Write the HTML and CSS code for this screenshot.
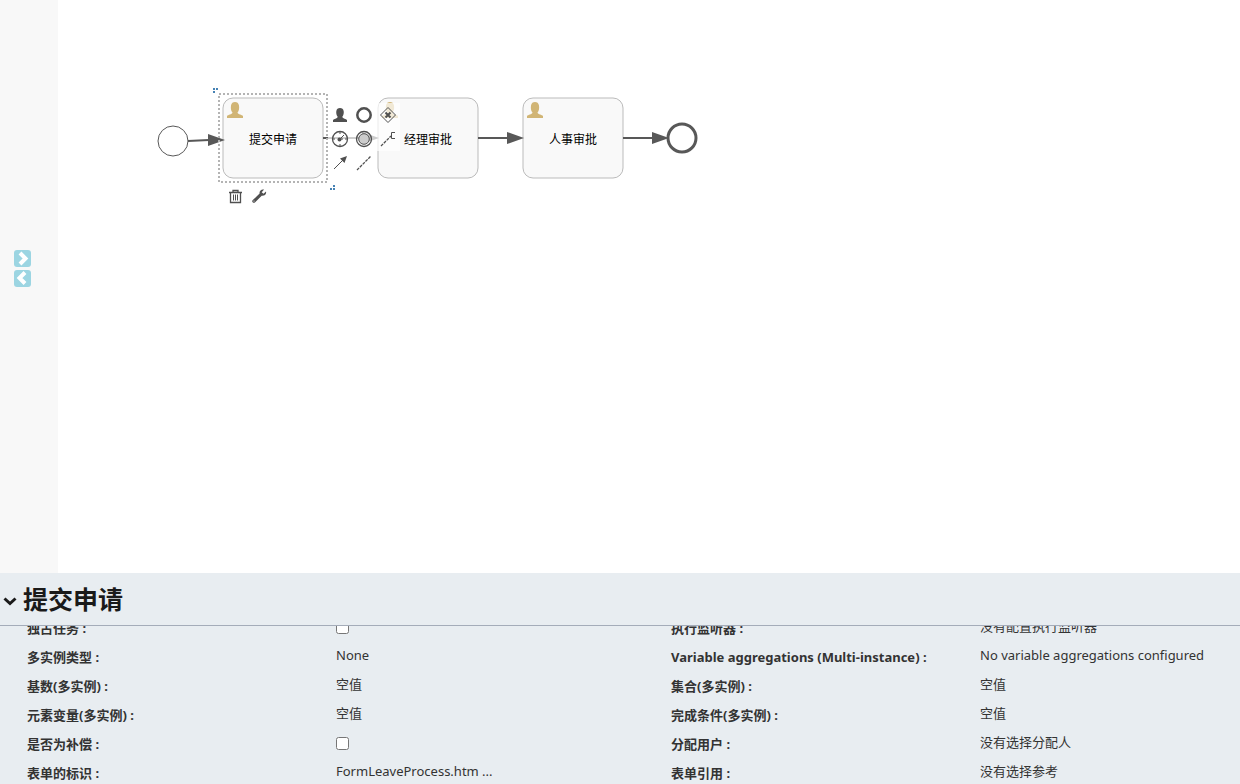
FILE: index.html
```html
<!DOCTYPE html>
<html lang="zh-CN">
<head>
<meta charset="utf-8">
<title>流程设计器</title>
<link rel="stylesheet" href="styles.css">
</head>
<body>
<div class="editor">
  <main class="workspace">
    <aside class="palette">
      <button class="toggle" aria-label="展开"><svg viewBox="0 0 17 17"><path d="M6 3l5.500 5.500L6 14"/></svg></button>
      <button class="toggle" aria-label="收起"><svg viewBox="0 0 17 17"><path d="M11 2.500L5.500 8l5.500 5.500"/></svg></button>
    </aside>
    <section class="canvas">
      <svg class="diagram" aria-label="请假流程">
        <defs>
          <path id="user" d="M0 16v-2c1-1.300 5-1.500 5.500-3.500C4 9 3.600 6.500 4 3.500 4.400 1 6 0 8 0s3.600 1 4 3.500c.4 3 0 5.500-1.500 7 .5 2 4.500 2.200 5.500 3.500v2z"/>
        </defs>
        <circle class="start" cx="115" cy="141" r="15"/>
        <circle class="end" cx="624" cy="138" r="14"/>
        <rect class="task" x="165" y="98" width="100" height="80" rx="10"/>
        <rect class="task" x="320" y="98" width="100" height="80" rx="10"/>
        <rect class="task" x="465" y="98" width="100" height="80" rx="10"/>
        <g class="flow">
          <path d="M130 141l21-1M265 138h43M420 138h32M565 138h32"/>
          <path class="tip" d="M150 134l17 6-17 6zM304 132l17 6-17 6zM449 132l17 6-17 6zM594 132l17 6-17 6z"/>
        </g>
        <use class="user" href="#user" x="169" y="102"/>
        <use class="user" href="#user" x="324" y="102"/>
        <use class="user" href="#user" x="469" y="102"/>
        <text class="name" x="215" y="144">提交申请</text>
        <text class="name" x="370" y="144">经理审批</text>
        <text class="name" x="515" y="144">人事审批</text>
        <rect class="selection" x="161" y="94" width="108" height="88"/>
        <path class="grip" d="M155 88h2v2h-2zM158 88h2v2h-2zM155 91h2v2h-2zM275 185h2v2h-2zM272 188h2v2h-2zM275 188h2v2h-2z"/>
      </svg>
      <div class="pad pad-append">
        <button aria-label="用户任务"><svg viewBox="0 0 24 24"><path class="solid" d="M5 19v-2c1-1.300 4-1.300 4.800-3C8.500 12.500 8 10.500 8.300 8.300 8.600 6 10 5 12 5s3.400 1 3.700 3.300c.3 2.200-.2 4.200-1.500 5.700.8 1.700 3.800 1.700 4.800 3v2z"/></svg></button>
        <button aria-label="结束事件"><svg viewBox="0 0 24 24"><circle class="bold" cx="12" cy="12" r="6.700"/></svg></button>
        <button aria-label="排他网关"><svg viewBox="0 0 24 24"><path d="M12 4.500l7.500 7.500-7.500 7.500L4.500 12z"/><path class="thick" d="M9.500 9.500l5 5m0-5l-5 5"/></svg></button>
        <button aria-label="定时事件"><svg viewBox="0 0 24 24"><circle class="ring" cx="12" cy="12" r="7.500"/><path d="M12 5v2M12 17v2M5 12h2M17 12h2M12 12l4-4M12 12h3"/><circle class="solid" cx="11.500" cy="12.500" r="2"/></svg></button>
        <button aria-label="中间事件"><svg viewBox="0 0 24 24"><circle class="ring" cx="12" cy="12" r="7.500"/><circle class="shade" cx="12" cy="12" r="5.300"/></svg></button>
        <button aria-label="文本注释"><svg viewBox="0 0 24 24"><path class="broken" d="M5 19L15 9"/><path d="M19 5.500h-3.500v6H19"/></svg></button>
        <button aria-label="顺序流"><svg viewBox="0 0 24 24"><path d="M6 18L16 8"/><path class="solid" d="M19 5l-2.500 7-4.500-4.500z"/></svg></button>
        <button aria-label="关联"><svg viewBox="0 0 24 24"><path class="broken" d="M5 19L19 5"/></svg></button>
      </div>
      <div class="pad pad-edit">
        <button aria-label="删除"><svg viewBox="0 0 24 24"><path class="ring" d="M6 8.500h13M10 8V6.500h5V8M7.500 9v9.500h10V9"/><path d="M10.500 10.500v6M12.500 10.500v6M14.500 10.500v6"/></svg></button>
        <button aria-label="更改类型"><svg viewBox="0 0 24 24"><path class="solid" d="M19 7.500L16.500 9.800l-1.800-1.600 2.400-2.600c-2.400-.8-5 .9-4.500 4L5.600 16.300c-1.300 1.500.8 3.400 2.300 2.100l6.800-6.600c3 .3 5-1.900 4.300-4.300z"/><circle class="hole" cx="7" cy="17" r=".6"/></svg></button>
      </div>
    </section>
  </main>
  <section class="properties">
    <header class="titlebar">
      <button class="collapse" aria-label="折叠属性"><svg viewBox="0 0 14 10"><path d="M1.500 2.500L7 7.500l5.500-5"/></svg></button>
      <h1>提交申请</h1>
    </header>
    <div class="scroller">
      <dl class="fields">
        <dt><label for="exclusive">独占任务 :</label></dt><dd><input type="checkbox" id="exclusive"></dd>
        <dt>执行监听器 :</dt><dd>没有配置执行监听器</dd>
        <dt>多实例类型 :</dt><dd>None</dd>
        <dt>Variable aggregations (Multi-instance) :</dt><dd>No variable aggregations configured</dd>
        <dt>基数(多实例) :</dt><dd>空值</dd>
        <dt>集合(多实例) :</dt><dd>空值</dd>
        <dt>元素变量(多实例) :</dt><dd>空值</dd>
        <dt>完成条件(多实例) :</dt><dd>空值</dd>
        <dt><label for="compensation">是否为补偿 :</label></dt><dd><input type="checkbox" id="compensation"></dd>
        <dt>分配用户 :</dt><dd>没有选择分配人</dd>
        <dt>表单的标识 :</dt><dd>FormLeaveProcess.htm ...</dd>
        <dt>表单引用 :</dt><dd>没有选择参考</dd>
      </dl>
    </div>
  </section>
</div>
</body>
</html>
```
FILE: styles.css
```css
* { box-sizing: border-box; }
body { margin: 0; color: #333; font: 13px/20px "Noto Sans", "Noto Sans CJK SC", sans-serif; }
button { display: grid; place-items: center; margin: 0; padding: 0; border: 0; background: none; cursor: pointer; }
.editor { display: flex; flex-direction: column; height: 100vh; overflow: hidden; }
.workspace { display: flex; flex: 1; min-height: 0; background: #fff; }

.palette { display: flex; flex-direction: column; gap: 3px; width: 58px; padding: 250px 14px 0; background: #f8f8f8; }
.toggle { width: 17px; height: 17px; border-radius: 3px; background: #9cd5e2; }
.toggle svg { width: 17px; height: 17px; fill: none; stroke: #fff; stroke-width: 4; }

.canvas { position: relative; flex: 1; min-width: 0; }
.diagram { display: block; width: 100%; height: 100%; }
.flow { fill: none; stroke: #585858; stroke-width: 2; }
.tip { fill: #585858; stroke: none; }
.start { fill: #fff; stroke: #585858; stroke-width: 1; }
.end { fill: #fff; stroke: #585858; stroke-width: 3; }
.task { fill: #f9f9f9; stroke: #bbb; stroke-width: 1; }
.user { fill: #d1b575; }
.name { fill: #000; font-size: 12px; text-anchor: middle; }
.selection { fill: none; stroke: #b4b4b4; stroke-width: 2; stroke-dasharray: 2 2; }
.grip { fill: #4682b4; }

.pad { position: absolute; display: grid; grid-auto-rows: 24px; }
.pad-append { left: 270px; top: 103px; grid-template-columns: repeat(3, 24px); }
.pad-edit { left: 165px; top: 184px; grid-template-columns: repeat(2, 24px); }
.pad button { background: rgba(255, 255, 255, .7); }
.pad svg { width: 24px; height: 24px; fill: none; stroke: #505050; stroke-width: 1; }
.pad .solid { fill: #505050; stroke: none; }
.pad .ring { stroke-width: 1.3; }
.pad .thick { stroke-width: 2; }
.pad .bold { stroke-width: 2.5; }
.pad .shade { fill: #ccc; }
.pad .broken { stroke-width: 1.3; stroke-dasharray: 3 1; }
.pad .hole { fill: #fff; stroke: none; }

.properties { display: flex; flex-direction: column; height: 211px; background: #e8edf1; }
.titlebar { display: flex; align-items: center; gap: 6px; height: 53px; padding-left: 3px; border-bottom: 1px solid #a4acb9; flex: none; }
.collapse { width: 14px; height: 10px; margin-top: 4px; }
.collapse svg { width: 14px; height: 10px; fill: none; stroke: #1a1a1a; stroke-width: 3; }
h1 { margin: 0; color: #1a1a1a; font-size: 25px; line-height: 36px; font-weight: 700; }
.scroller { flex: 1; min-height: 0; overflow: hidden; }
.fields { display: grid; grid-template-columns: 309fr 335fr 309fr 260fr; grid-auto-rows: 29px; margin: -12px 0 0; padding-left: 27px; }
dt { padding-top: 4px; font-weight: 700; white-space: nowrap; }
dd { margin: 0; padding-top: 2px; white-space: nowrap; }
dd input { display: block; width: 13px; height: 13px; margin: 5px 0 0; }
```
